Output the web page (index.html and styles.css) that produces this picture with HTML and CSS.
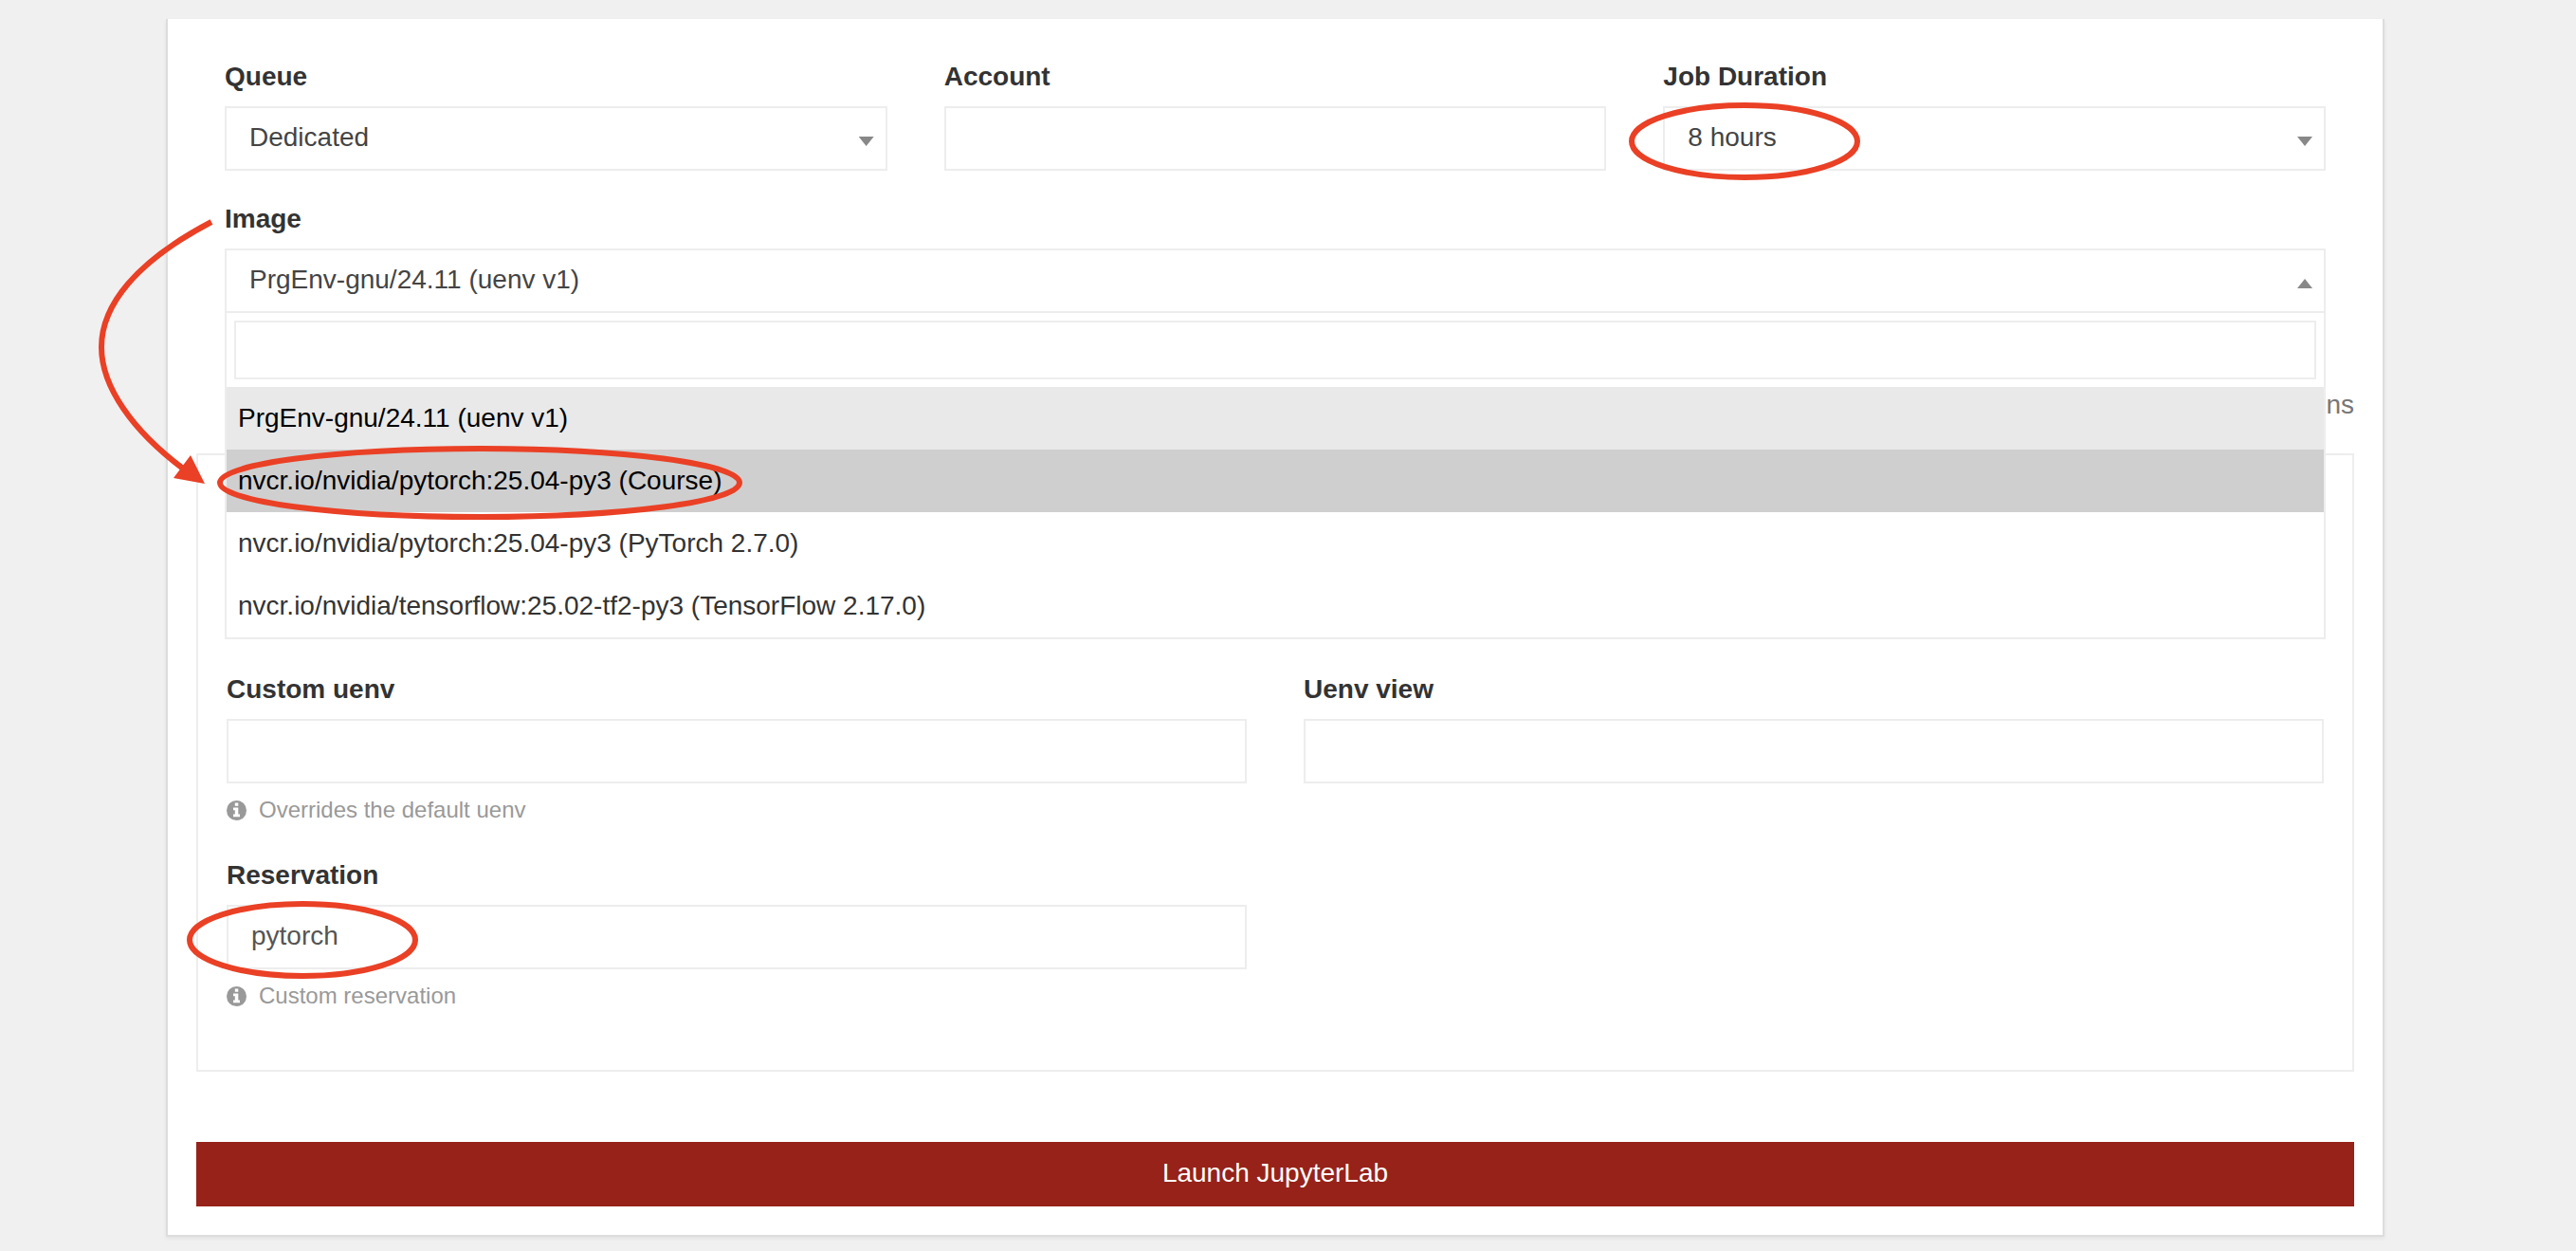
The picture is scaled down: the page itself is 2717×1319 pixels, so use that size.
FILE: index.html
```html
<!DOCTYPE html>
<html lang="en">
<head>
<meta charset="utf-8">
<title>Launch JupyterLab</title>
<link rel="stylesheet" href="styles.css">
</head>
<body>
<main class="page">
  <form class="card">
    <div class="fields">
      <div class="row row-three">
        <div class="group">
          <label class="label" for="queue">Queue</label>
          <div class="control caret-down">
            <select class="field" id="queue"><option>Dedicated</option></select>
          </div>
        </div>
        <div class="group">
          <label class="label" for="account">Account</label>
          <div class="control"><input class="field" id="account" type="text"></div>
        </div>
        <div class="group">
          <label class="label" for="duration">Job Duration</label>
          <div class="control caret-down">
            <select class="field" id="duration"><option>8 hours</option></select>
            <svg class="ring ring-value" viewBox="0 0 244 82" aria-hidden="true"><ellipse cx="122" cy="41" rx="119" ry="38"/></svg>
          </div>
        </div>
      </div>
      <div class="group">
        <label class="label" for="image">Image</label>
        <div class="control caret-up">
          <select class="field" id="image"><option>PrgEnv-gnu/24.11 (uenv v1)</option></select>
          <div class="dropdown">
            <input class="search" type="search" aria-label="Search images">
            <ul class="options" role="listbox" aria-label="Image">
              <li class="option option-selected" role="option" aria-selected="true">PrgEnv-gnu/24.11 (uenv v1)</li>
              <li class="option option-active" role="option">nvcr.io/nvidia/pytorch:25.04-py3 (Course)<svg class="ring ring-option" viewBox="0 0 554 78" aria-hidden="true"><ellipse cx="277" cy="39" rx="274" ry="36"/></svg></li>
              <li class="option" role="option">nvcr.io/nvidia/pytorch:25.04-py3 (PyTorch 2.7.0)</li>
              <li class="option" role="option">nvcr.io/nvidia/tensorflow:25.02-tf2-py3 (TensorFlow 2.17.0)</li>
            </ul>
          </div>
          <svg class="arrow" width="130" height="290" viewBox="100 230 130 290" aria-hidden="true">
            <path d="M223 234C143 276 107 322 107 366C107 408 140 454 193 494" fill="none" stroke="#ea4025" stroke-width="6"/>
            <path d="M216 510L201 480L183 504Z" fill="#ea4025"/>
          </svg>
        </div>
      </div>
    </div>
    <a class="toggle" href="#advanced">Advanced options</a>
    <section class="advanced" id="advanced">
      <div class="row row-two">
        <div class="group">
          <label class="label" for="uenv">Custom uenv</label>
          <div class="control"><input class="field" id="uenv" type="text"></div>
          <p class="help"><svg class="info" viewBox="0 0 21 21" aria-hidden="true"><circle cx="10.5" cy="10.5" r="10.5" fill="#999"/><path d="M8.8 2.6h3.5v3.2H8.8zM7 7.5h5.3v7H14v2.8H7v-2.8h1.8v-4.2H7z" fill="#fff"/></svg>Overrides the default uenv</p>
        </div>
        <div class="group">
          <label class="label" for="view">Uenv view</label>
          <div class="control"><input class="field" id="view" type="text"></div>
        </div>
        <div class="group">
          <label class="label" for="reservation">Reservation</label>
          <div class="control">
            <input class="field" id="reservation" type="text" value="pytorch">
            <svg class="ring ring-reservation" viewBox="0 0 244 82" aria-hidden="true"><ellipse cx="122" cy="41" rx="119" ry="38"/></svg>
          </div>
          <p class="help"><svg class="info" viewBox="0 0 21 21" aria-hidden="true"><circle cx="10.5" cy="10.5" r="10.5" fill="#999"/><path d="M8.8 2.6h3.5v3.2H8.8zM7 7.5h5.3v7H14v2.8H7v-2.8h1.8v-4.2H7z" fill="#fff"/></svg>Custom reservation</p>
        </div>
      </div>
    </section>
    <button class="launch" type="submit">Launch JupyterLab</button>
  </form>
</main>
</body>
</html>
```
FILE: styles.css
```css
* { box-sizing: border-box; }

body {
  margin: 0;
  background: #f0f0f0;
  color: #333;
  font: 28px/40px "Liberation Sans", Arial, sans-serif;
}

.page { padding: 20px 202px 12px 175px; }

.card {
  display: flex;
  flex-direction: column;
  padding: 42px 30px 30px;
  background: #fff;
  border: solid #ddd;
  border-width: 0 2px 2px;
  box-shadow: 0 2px 4px rgba(0, 0, 0, 0.06);
}

.fields {
  display: flex;
  flex-direction: column;
  gap: 32px;
  padding: 0 30px;
}

.row { display: grid; gap: 32px 60px; }
.row-three { grid-template-columns: repeat(3, 1fr); }
.row-two { grid-template-columns: repeat(2, 1fr); }

.label {
  display: block;
  margin-bottom: 12px;
  font-weight: bold;
  line-height: 38px;
}

.control { position: relative; }

.field {
  display: block;
  width: 100%;
  height: 68px;
  padding: 0 24px 2px;
  background: #fff;
  border: 2px solid #ededed;
  border-radius: 0;
  color: #555;
  font: inherit;
  appearance: none;
}

select.field { color: #444; }

.caret-down::after,
.caret-up::after {
  content: "";
  position: absolute;
  top: 32px;
  right: 14px;
  width: 16px;
  height: 10px;
  background: #888;
  clip-path: polygon(0 0, 100% 0, 50% 100%);
}

.caret-up::after { clip-path: polygon(50% 0, 100% 100%, 0 100%); }

.dropdown {
  position: absolute;
  top: 100%;
  left: 0;
  right: 0;
  z-index: 1;
  padding-top: 8px;
  background: #fff;
  border: solid #ededed;
  border-width: 0 2px 2px;
}

.search {
  display: block;
  width: calc(100% - 16px);
  height: 62px;
  margin: 0 8px 8px;
  padding: 0 8px;
  background: #fff;
  border: 2px solid #ededed;
  font: inherit;
  appearance: none;
}

.options { margin: 0; padding: 0; list-style: none; }
.option { position: relative; padding: 13px 12px; }
.option-selected { background: #e9e9e9; color: #000; }
.option-active { background: #cfcfcf; color: #000; }

.toggle {
  align-self: flex-end;
  margin: 77px 0 31px;
  color: #777;
  text-decoration: none;
}

.advanced {
  padding: 228px 30px 60px;
  border: 2px solid #ededed;
}

.help {
  display: flex;
  align-items: center;
  gap: 13px;
  margin: 10px 0 0;
  color: #999;
  font-size: 24px;
  line-height: 36px;
}

.info { width: 21px; height: 21px; }

.launch {
  height: 68px;
  margin-top: 74px;
  padding: 0 24px 2px;
  background: #962219;
  border: 0;
  color: #fff;
  font: inherit;
}

/* Red markers laid over the values the reader has to set */
.ring {
  position: absolute;
  top: -4px;
  z-index: 2;
  width: 244px;
  height: 82px;
  fill: none;
  stroke: #ea4025;
  stroke-width: 6px;
  pointer-events: none;
}

.ring-value { left: -36px; }
.ring-option { left: -10px; width: 554px; height: 78px; }
.ring-reservation { left: -42px; }

.arrow {
  position: absolute;
  top: -32px;
  left: -137px;
  z-index: 2;
  pointer-events: none;
}
```
